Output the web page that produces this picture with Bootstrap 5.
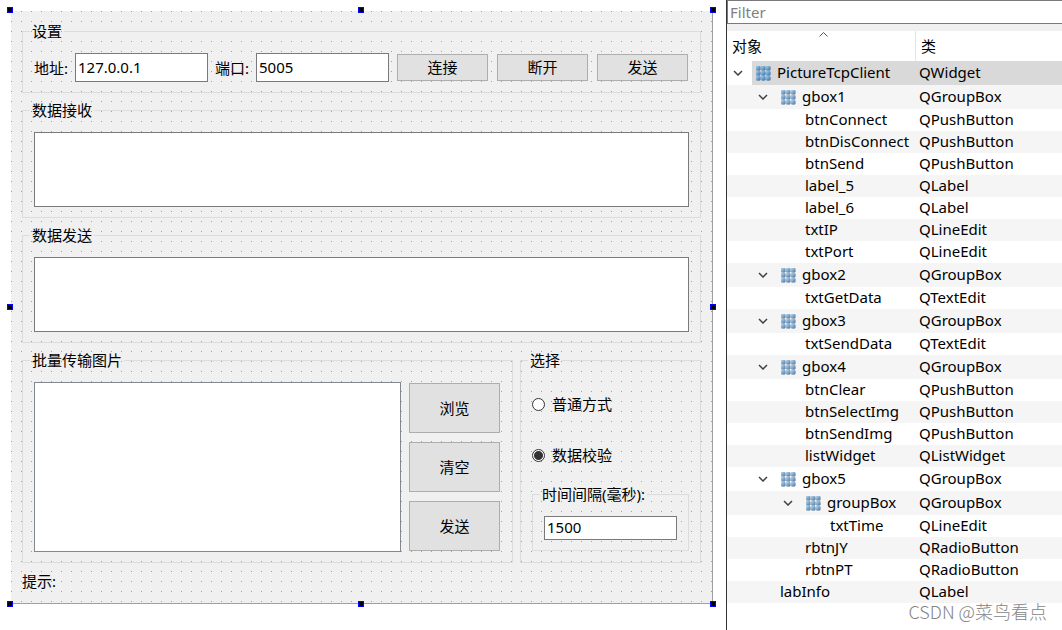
<!DOCTYPE html>
<html lang="zh-CN">
<head>
<meta charset="utf-8">
<meta name="viewport" content="width=device-width, initial-scale=1">
<title>PictureTcpClient</title>
<link href="https://cdn.jsdelivr.net/npm/bootstrap@5.3.0/dist/css/bootstrap.min.css" rel="stylesheet">
<style>
  body { font: 400 15px/20px "Noto Sans", "Noto Sans CJK SC", sans-serif; color: #000; background: #fff; }

  /* form designer canvas */
  .canvas-pane { padding: 11px 13px 11px 11px; min-width: 0; }
  .form-canvas {
    padding: 10px 11px 11px;
    gap: 7px;
    border: solid #a0a0a0;
    border-width: 0 1px 1px 0;
    background-color: #f0f0f0;
    background-image: linear-gradient(#f0f0f000 1px, #f0f0f0 1px), linear-gradient(90deg, #a0a0a0 1px, #f0f0f0 1px);
    background-size: 10px 10px;
  }
  .form-row { gap: 7px; }
  .gbox { border: 1px solid #dcdcdc; padding: 12px 11px 10px; min-width: 0; }
  .gbox > legend { float: none; width: auto; margin: 0 0 0 -4px; padding: 0 2px; font-size: 15px; line-height: 20px; height: 20px; }
  .gbox-options { flex: 0 0 181px; }
  .field-label { width: 34px; flex: none; white-space: nowrap; }
  .form-control.field { min-width: 0; border: 1px solid #7a7a7a; border-radius: 0; padding: 0 2px 2px; font-size: 15px; font-weight: inherit; line-height: 20px; color: #000; background: #fff; resize: none; }
  .field-line { height: 29px; }
  .field-short { height: 24px; }
  .field-area { height: 75px; }
  .picture-list { border: 1px solid #828790; background: #fff; min-width: 0; }
  .btn.push { width: 91px; height: 27px; margin: 1px; padding: 0 0 1px; border: 1px solid #adadad; border-radius: 0; background: #e1e1e1; color: #000; font-size: 15px; font-weight: inherit; line-height: 20px; flex: none; }
  .btn.push-tall { height: 50px; }
  .radio-line { min-height: 44px; gap: 7px; }
  .radio-line .form-check-input { width: 13px; height: 13px; margin: 0; border: 1px solid #333; background: #fff; flex: none; }
  .radio-line .form-check-input:checked { background: radial-gradient(circle, #333 4px, #fff 5px); }
  .hint { height: 22px; line-height: 22px; }

  /* selection handles on the canvas edge */
  .grip { position: absolute; width: 6px; height: 6px; background: #000; border: 1px solid #00f; }
  .grip-t { top: -4px; } .grip-m { top: calc(50% - 3px); } .grip-b { bottom: -4px; }
  .grip-l { left: -4px; } .grip-c { left: calc(50% - 4px); } .grip-r { right: -4px; }

  /* object inspector */
  .inspector { flex: 0 0 336px; border-left: 1px solid #333; min-height: 100vh; }
  .form-control.filter { height: 24px; border: 1px solid #7a7a7a; border-right: 0; border-radius: 0; padding: 0 2px; font-size: 15px; font-weight: inherit; line-height: 20px; color: #000; }
  .filter::placeholder { color: #808080; opacity: 1; }
  .strip { height: 7px; background: #f0f0f0; }
  .tree { width: 100%; table-layout: fixed; border-collapse: separate; border-spacing: 0; }
  .tree th { height: 30px; padding: 0 5px; font-weight: inherit; position: relative; }
  .tree th + th { border-left: 1px solid #e5e5e5; }
  .tree td { height: 22px; padding: 0 0 2px; white-space: nowrap; }
  .tree td + td { padding-left: 4px; }
  .tree .branch td { height: 24px; }
  .tree .branch td:first-child { padding-bottom: 0; }
  .tree tbody tr:nth-child(even) { background: #f5f5f5; }
  .tree .chosen td + td, .tree .chosen .node { background: #d9d9d9; }
  .node { padding-left: 3px; }
  .branch .node { padding: 0 0 2px 4px; gap: 6px; height: 24px; }
  .twist { width: 25px; flex: none; padding-left: 6px; }
  .lv1 { padding-left: 25px; } .lv2 { padding-left: 50px; } .lv3 { padding-left: 75px; }
  .leaf { margin-left: 25px; }
  .sorter { position: absolute; top: 1px; left: 92px; }
  .grid-icon { color: #7d9dbd; margin-top: 2px; }
  .chosen .grid-icon { color: #2f7fc4; }
  .watermark { position: absolute; right: 15px; bottom: 10px; font: 300 18px/18px "Noto Sans CJK SC", sans-serif; color: #858585; white-space: nowrap; }
</style>
</head>
<body>
<svg class="position-absolute" width="0" height="0" aria-hidden="true">
  <defs>
    <linearGradient id="bead" x1="0" y1="0" x2="1" y2="1">
      <stop offset="0" stop-color="#d5edfb"/><stop offset=".5" stop-color="#7eabd0"/><stop offset="1" stop-color="#4d6585"/>
    </linearGradient>
    <g id="dot"><rect width="4.4" height="4.4" rx="1.2" fill="currentColor"/><rect width="4.4" height="4.4" rx="1.2" fill="url(#bead)" opacity=".75"/></g>
  </defs>
  <symbol id="grid" viewBox="0 0 15 15">
    <use href="#dot" x="0" y="0"/><use href="#dot" x="5" y="0"/><use href="#dot" x="10" y="0"/>
    <use href="#dot" x="0" y="5"/><use href="#dot" x="5" y="5"/><use href="#dot" x="10" y="5"/>
    <use href="#dot" x="0" y="10"/><use href="#dot" x="5" y="10"/><use href="#dot" x="10" y="10"/>
  </symbol>
  <symbol id="chev" viewBox="0 0 10 6"><path d="M1 1l4 4 4-4" fill="none" stroke="#404040" stroke-width="1.5"/></symbol>
</svg>

<div class="d-flex align-items-start position-relative">
  <main class="canvas-pane flex-grow-1">
    <form class="form-canvas d-flex flex-column position-relative">
      <fieldset class="gbox">
        <legend>设置</legend>
        <div class="form-row d-flex align-items-center">
          <label class="field-label" for="txtIP">地址:</label>
          <input class="form-control field field-line" id="txtIP" type="text" value="127.0.0.1">
          <label class="field-label" for="txtPort">端口:</label>
          <input class="form-control field field-line" id="txtPort" type="text" value="5005">
          <button type="button" class="btn push">连接</button>
          <button type="button" class="btn push">断开</button>
          <button type="button" class="btn push">发送</button>
        </div>
      </fieldset>
      <fieldset class="gbox">
        <legend>数据接收</legend>
        <textarea class="form-control field field-area d-block" aria-label="数据接收"></textarea>
      </fieldset>
      <fieldset class="gbox">
        <legend>数据发送</legend>
        <textarea class="form-control field field-area d-block" aria-label="数据发送"></textarea>
      </fieldset>
      <div class="form-row d-flex">
        <fieldset class="gbox flex-grow-1">
          <legend>批量传输图片</legend>
          <div class="form-row d-flex">
            <div class="picture-list flex-grow-1" role="listbox" aria-label="批量传输图片"></div>
            <div class="form-row d-flex flex-column">
              <button type="button" class="btn push push-tall">浏览</button>
              <button type="button" class="btn push push-tall">清空</button>
              <button type="button" class="btn push push-tall">发送</button>
            </div>
          </div>
        </fieldset>
        <fieldset class="gbox gbox-options">
          <legend>选择</legend>
          <div class="form-row d-flex flex-column">
            <div class="radio-line d-flex align-items-center">
              <input class="form-check-input" type="radio" name="mode" id="rbtnPT"><label for="rbtnPT">普通方式</label>
            </div>
            <div class="radio-line d-flex align-items-center">
              <input class="form-check-input" type="radio" name="mode" id="rbtnJY" checked><label for="rbtnJY">数据校验</label>
            </div>
            <fieldset class="gbox">
              <legend>时间间隔(毫秒):</legend>
              <input class="form-control field field-short d-block" id="txtTime" type="text" value="1500" aria-label="时间间隔(毫秒)">
            </fieldset>
          </div>
        </fieldset>
      </div>
      <div class="hint">提示:</div>
      <span class="grip grip-t grip-l"></span><span class="grip grip-t grip-c"></span><span class="grip grip-t grip-r"></span>
      <span class="grip grip-m grip-l"></span><span class="grip grip-m grip-r"></span>
      <span class="grip grip-b grip-l"></span><span class="grip grip-b grip-c"></span><span class="grip grip-b grip-r"></span>
    </form>
  </main>

  <aside class="inspector">
    <input class="form-control filter" type="text" placeholder="Filter" aria-label="Filter">
    <div class="strip"></div>
    <table class="tree">
      <colgroup><col style="width:188px"><col></colgroup>
      <thead>
        <tr><th scope="col">对象<svg class="sorter" width="9" height="5" viewBox="0 0 9 5"><path d="M.5 4.5l4-4 4 4" fill="none" stroke="#555"/></svg></th><th scope="col">类</th></tr>
      </thead>
      <tbody>
        <tr class="branch chosen"><td><div class="d-flex align-items-center"><svg class="twist" height="6"><use href="#chev" width="10" height="6"/></svg><div class="node d-flex align-items-center flex-grow-1"><svg class="grid-icon" width="15" height="15"><use href="#grid"/></svg>PictureTcpClient</div></div></td><td>QWidget</td></tr>
        <tr class="branch"><td><div class="d-flex align-items-center lv1"><svg class="twist" height="6"><use href="#chev" width="10" height="6"/></svg><div class="node d-flex align-items-center"><svg class="grid-icon" width="15" height="15"><use href="#grid"/></svg>gbox1</div></div></td><td>QGroupBox</td></tr>
        <tr><td><div class="lv2"><div class="node leaf">btnConnect</div></div></td><td>QPushButton</td></tr>
        <tr><td><div class="lv2"><div class="node leaf">btnDisConnect</div></div></td><td>QPushButton</td></tr>
        <tr><td><div class="lv2"><div class="node leaf">btnSend</div></div></td><td>QPushButton</td></tr>
        <tr><td><div class="lv2"><div class="node leaf">label_5</div></div></td><td>QLabel</td></tr>
        <tr><td><div class="lv2"><div class="node leaf">label_6</div></div></td><td>QLabel</td></tr>
        <tr><td><div class="lv2"><div class="node leaf">txtIP</div></div></td><td>QLineEdit</td></tr>
        <tr><td><div class="lv2"><div class="node leaf">txtPort</div></div></td><td>QLineEdit</td></tr>
        <tr class="branch"><td><div class="d-flex align-items-center lv1"><svg class="twist" height="6"><use href="#chev" width="10" height="6"/></svg><div class="node d-flex align-items-center"><svg class="grid-icon" width="15" height="15"><use href="#grid"/></svg>gbox2</div></div></td><td>QGroupBox</td></tr>
        <tr><td><div class="lv2"><div class="node leaf">txtGetData</div></div></td><td>QTextEdit</td></tr>
        <tr class="branch"><td><div class="d-flex align-items-center lv1"><svg class="twist" height="6"><use href="#chev" width="10" height="6"/></svg><div class="node d-flex align-items-center"><svg class="grid-icon" width="15" height="15"><use href="#grid"/></svg>gbox3</div></div></td><td>QGroupBox</td></tr>
        <tr><td><div class="lv2"><div class="node leaf">txtSendData</div></div></td><td>QTextEdit</td></tr>
        <tr class="branch"><td><div class="d-flex align-items-center lv1"><svg class="twist" height="6"><use href="#chev" width="10" height="6"/></svg><div class="node d-flex align-items-center"><svg class="grid-icon" width="15" height="15"><use href="#grid"/></svg>gbox4</div></div></td><td>QGroupBox</td></tr>
        <tr><td><div class="lv2"><div class="node leaf">btnClear</div></div></td><td>QPushButton</td></tr>
        <tr><td><div class="lv2"><div class="node leaf">btnSelectImg</div></div></td><td>QPushButton</td></tr>
        <tr><td><div class="lv2"><div class="node leaf">btnSendImg</div></div></td><td>QPushButton</td></tr>
        <tr><td><div class="lv2"><div class="node leaf">listWidget</div></div></td><td>QListWidget</td></tr>
        <tr class="branch"><td><div class="d-flex align-items-center lv1"><svg class="twist" height="6"><use href="#chev" width="10" height="6"/></svg><div class="node d-flex align-items-center"><svg class="grid-icon" width="15" height="15"><use href="#grid"/></svg>gbox5</div></div></td><td>QGroupBox</td></tr>
        <tr class="branch"><td><div class="d-flex align-items-center lv2"><svg class="twist" height="6"><use href="#chev" width="10" height="6"/></svg><div class="node d-flex align-items-center"><svg class="grid-icon" width="15" height="15"><use href="#grid"/></svg>groupBox</div></div></td><td>QGroupBox</td></tr>
        <tr><td><div class="lv3"><div class="node leaf">txtTime</div></div></td><td>QLineEdit</td></tr>
        <tr><td><div class="lv2"><div class="node leaf">rbtnJY</div></div></td><td>QRadioButton</td></tr>
        <tr><td><div class="lv2"><div class="node leaf">rbtnPT</div></div></td><td>QRadioButton</td></tr>
        <tr><td><div class="lv1"><div class="node leaf">labInfo</div></div></td><td>QLabel</td></tr>
      </tbody>
    </table>
  </aside>
  <div class="watermark">CSDN @菜鸟看点</div>
</div>
<script src="https://cdn.jsdelivr.net/npm/bootstrap@5.3.0/dist/js/bootstrap.bundle.min.js"></script>
</body>
</html>
